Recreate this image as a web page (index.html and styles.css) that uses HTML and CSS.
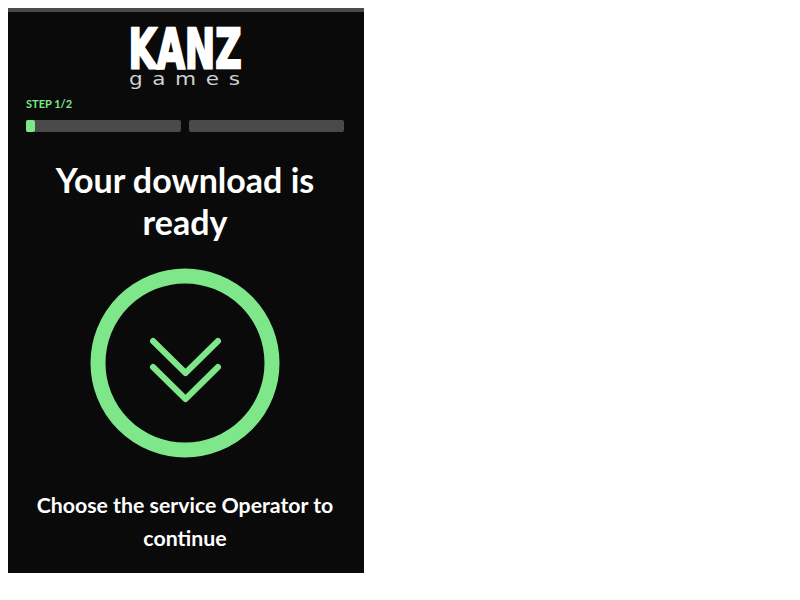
FILE: index.html
```html
<!DOCTYPE html>
<html lang="en">
<head>
  <meta charset="UTF-8">
  <title>Kanz Games</title>
  <link rel="stylesheet" href="styles.css">
</head>
<body>
  <div class="panel">
    <div class="logo">
      <div class="logo__name">KANZ</div>
      <div class="logo__sub">games</div>
    </div>

    <div class="step">STEP 1/2</div>
    <div class="progress">
      <div class="progress__bar">
        <div class="progress__fill"></div>
      </div>
      <div class="progress__bar"></div>
    </div>

    <h1 class="title">Your download is ready</h1>

    <svg class="download-icon" width="190" height="190" viewBox="0 0 190 190">
      <circle cx="95" cy="95" r="87" fill="none" stroke="#7ee78a" stroke-width="15"/>
      <path d="M63 73 L95.500 105 L128 73 M63 99 L95.500 131 L128 99" fill="none" stroke="#7ee78a" stroke-width="6" stroke-linecap="round" stroke-linejoin="round"/>
    </svg>

    <p class="hint">Choose the service Operator to continue</p>
  </div>
</body>
</html>
```

FILE: styles.css
```css
* {
  box-sizing: border-box;
}

body {
  background: white;
  font-family: 'Lato', sans-serif;
}

.panel {
  display: flex;
  flex-direction: column;
  align-items: center;
  width: 356px;
  height: 565px;
  border-top: 4px solid #4a4a4a;
  background: #0a0a0a;
  padding: 0 20px 0 18px;
  color: white;
}

.logo {
  display: flex;
  flex-direction: column;
  align-items: center;
  margin-top: 15px;
  height: 59px;
}

.logo__name {
  height: 44px;
  font-family: 'DejaVu Sans', sans-serif;
  font-size: 56px;
  font-weight: bold;
  line-height: 44px;
  transform: scaleX(0.65);
  -webkit-text-stroke: 2.5px white;
}

.logo__sub {
  font-family: 'DejaVu Sans', sans-serif;
  font-size: 18px;
  line-height: 15px;
  letter-spacing: 8px;
  margin-right: -8px;
  color: #d0d0d0;
  transform: scaleX(1.2);
}

.step {
  align-self: flex-start;
  margin-top: 10px;
  font-size: 11px;
  font-weight: 700;
  line-height: 15px;
  color: #7ee78a;
}

.progress {
  display: flex;
  gap: 8px;
  width: 100%;
  margin-top: 9px;
}

.progress__bar {
  flex: 1;
  height: 12px;
  border-radius: 2px;
  background: #4a4a4a;
}

.progress__fill {
  width: 9px;
  height: 100%;
  border-radius: 2px;
  background: #7ee78a;
}

.title {
  margin: 27px 0 0;
  font-size: 34px;
  font-weight: 700;
  line-height: 42px;
  text-align: center;
}

.download-icon {
  display: block;
  margin-top: 25px;
}

.hint {
  margin: 31px 0 0;
  font-size: 21.3px;
  font-weight: 700;
  line-height: 33px;
  text-align: center;
}
```
